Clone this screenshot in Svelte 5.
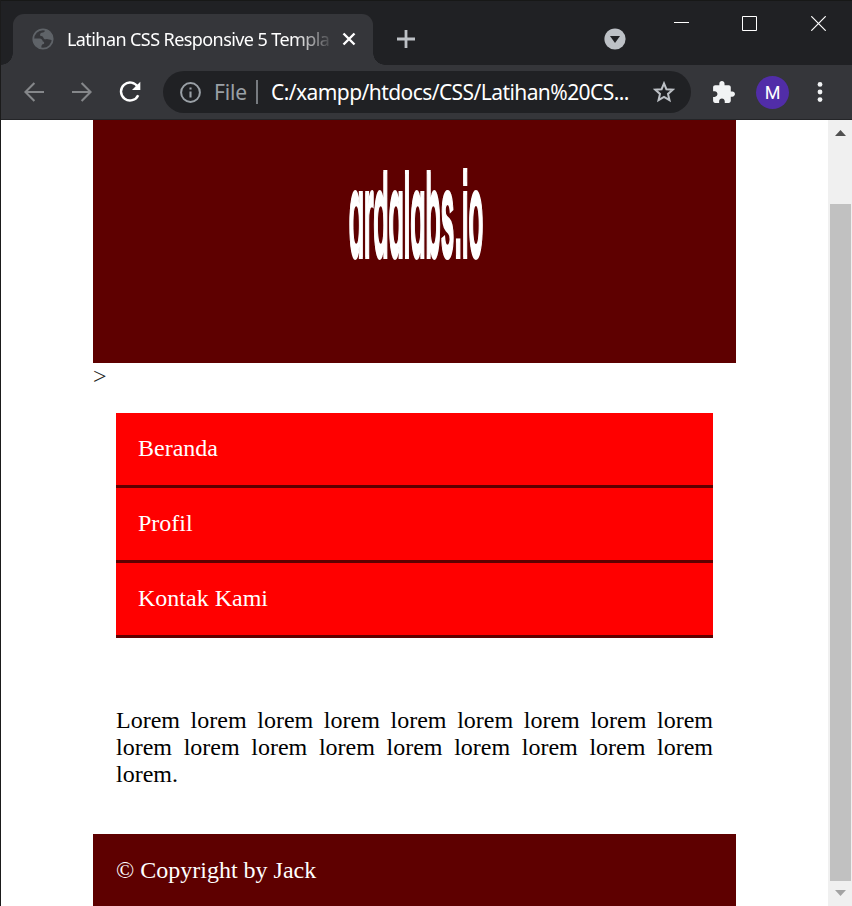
<script>
  const menu = ['Beranda', 'Profil', 'Kontak Kami'];
</script>

<div class="window">
  <div class="titlebar">
    <div class="tab">
      <svg class="globe" width="22" height="22" viewBox="0 0 22 22">
        <circle cx="11" cy="11" r="9.7" fill="none" stroke="#5f6368" stroke-width="1.8" />
        <path d="M13 1.5C13.2 4 11.8 4.6 9.6 4.8C8 5.3 8 6.6 8.2 7.8C9.6 8.2 11 8 11.3 9.6C11.7 11.3 12.8 11.6 14.2 11.2C16 10.8 17 12 20.5 12.2A10 10 0 0 0 13 1.5Z" fill="#5f6368" />
        <path d="M1.5 10.6H7.5C9.8 10.6 10.4 12 10.8 13.4C12.4 13.6 12.5 15 11.8 16C9.6 16.2 9.4 17.4 9.2 20.6A10 10 0 0 1 1.5 10.6Z" fill="#5f6368" />
      </svg>
      <span class="title">Latihan CSS Responsive 5 Templa</span>
      <svg class="close-tab" width="14" height="14" viewBox="0 0 14 14"><path d="M1.5 1.5 12.5 12.5M12.5 1.5 1.5 12.5" stroke="#fff" stroke-width="2.4" /></svg>
    </div>
    <svg class="plus" width="18" height="18" viewBox="0 0 18 18"><path d="M9 0V18M0 9H18" stroke="#bdc1c6" stroke-width="2.8" /></svg>
    <svg class="search" width="22" height="22" viewBox="0 0 22 22"><circle cx="11" cy="11" r="10.6" fill="#bdc1c6" /><path d="M6 8H16L11 15Z" fill="#202124" /></svg>
    <div class="controls">
      <svg width="15" height="15" viewBox="0 0 15 15"><path d="M0 6.5H15" stroke="#fff" /></svg>
      <svg width="15" height="15" viewBox="0 0 15 15"><path d="M.5 .5H14.5V14.5H.5Z" stroke="#fff" fill="none" /></svg>
      <svg width="15" height="15" viewBox="0 0 15 15"><path d="M.3 .3 14.7 14.7M14.7 .3 .3 14.7" stroke="#fff" stroke-width="1.2" /></svg>
    </div>
  </div>

  <div class="toolbar">
    <svg class="back" width="20" height="20" viewBox="0 0 20 20"><path d="M20 10H1.8M10.4 .9 1.4 10l9 9.1" fill="none" stroke="#85878a" stroke-width="2.1" /></svg>
    <svg class="forward" width="20" height="20" viewBox="0 0 20 20"><path d="M0 10H18.2M9.6 .9 18.6 10l-9 9.1" fill="none" stroke="#85878a" stroke-width="2.1" /></svg>
    <svg class="reload" width="22" height="22" viewBox="0 0 22 22"><path d="M18.8 6A9 9 0 1 0 19.2 14.2" fill="none" stroke="#fff" stroke-width="2.4" /><path d="M21.3 .8V9H13Z" fill="#fff" /></svg>
    <div class="address">
      <svg class="info" width="21" height="21" viewBox="0 0 21 21"><circle cx="10.5" cy="10.5" r="9.4" fill="none" stroke="#9aa0a6" stroke-width="2" /><path d="M10.5 9.4V15.4M10.5 5.4V7.6" stroke="#9aa0a6" stroke-width="2.1" /></svg>
      <span class="file">File</span>
      <span class="divider"></span>
      <span class="url">C:/xampp/htdocs/CSS/Latihan%20CS...</span>
      <svg class="star" width="22" height="22" viewBox="0 0 22 22"><path d="M11 2.4 13.4 8.2 19.8 8.7 15 12.9 16.5 19.2 11 15.9 5.5 19.2 7 12.9 2.2 8.7 8.6 8.2Z" fill="none" stroke="#bdc1c6" stroke-width="2" /></svg>
    </div>
    <svg class="puzzle" width="25" height="25" viewBox="0 0 24 24"><path fill="#f1f3f4" d="M20.5 11H19V7c0-1.1-.9-2-2-2h-4V3.5C13 2.12 11.88 1 10.5 1S8 2.12 8 3.5V5H4c-1.1 0-1.99.9-1.99 2v3.8H3.5c1.49 0 2.7 1.21 2.7 2.7s-1.21 2.7-2.7 2.7H2V20c0 1.1.9 2 2 2h3.8v-1.5c0-1.49 1.21-2.7 2.7-2.7 1.49 0 2.7 1.21 2.7 2.7V22H17c1.1 0 2-.9 2-2v-4h1.5c1.38 0 2.5-1.12 2.5-2.5S21.88 11 20.5 11z" /></svg>
    <div class="avatar">M</div>
    <svg class="dots" width="6" height="20" viewBox="0 0 6 20"><circle cx="3" cy="2.4" r="2.4" fill="#f1f3f4" /><circle cx="3" cy="10" r="2.4" fill="#f1f3f4" /><circle cx="3" cy="17.6" r="2.4" fill="#f1f3f4" /></svg>
  </div>

  <div class="viewport">
    <main>
      <header>
        <svg width="643" height="243" viewBox="0 0 643 243">
          <g transform="translate(255.7 136.5) scale(.2 1)">
            <text x="0" y="0" textLength="673" lengthAdjust="spacingAndGlyphs">ardalabs.io</text>
          </g>
        </svg>
      </header>
      <div class="stray">&gt;</div>
      <nav>
        {#each menu as item}
          <a href="#top">{item}</a>
        {/each}
      </nav>
      <p>Lorem lorem lorem lorem lorem lorem lorem lorem lorem lorem lorem lorem lorem lorem lorem lorem lorem lorem lorem.</p>
      <footer>© Copyright by Jack</footer>
    </main>
    <div class="scrollbar">
      <svg width="24" height="27" viewBox="0 0 24 27"><path d="M7 16H18L12.5 10Z" fill="#505050" /></svg>
      <div class="thumb"></div>
      <svg width="24" height="25" viewBox="0 0 24 25"><path d="M7 9H18L12.5 15Z" fill="#a3a3a3" /></svg>
    </div>
  </div>
</div>

<style>
  :global(body) { margin: 0; }
  .window {
    box-sizing: border-box;
    width: 852px;
    height: 906px;
    overflow: hidden;
    display: flex;
    flex-direction: column;
    background: #fff;
    border-left: 1px solid #1b1b1b;
  }
  svg { display: block; flex: none; }
  .titlebar {
    box-sizing: border-box;
    height: 65px;
    flex: none;
    display: flex;
    align-items: flex-start;
    background: #202124;
    border-top: 1px solid #171817;
    font-family: "Noto Sans", "Open Sans", sans-serif;
  }
  .tab {
    position: relative;
    box-sizing: border-box;
    width: 360px;
    height: 51px;
    margin: 13px 0 0 12px;
    padding: 0 0 2px 19px;
    display: flex;
    align-items: center;
    border-radius: 11px 11px 0 0;
    background: #35363a;
  }
  .tab::before, .tab::after {
    content: "";
    position: absolute;
    bottom: 0;
    width: 12px;
    height: 12px;
  }
  .tab::before { left: -12px; background: radial-gradient(circle at 0 0, transparent 11.5px, #35363a 12px); }
  .tab::after { right: -12px; background: radial-gradient(circle at 100% 0, transparent 11.5px, #35363a 12px); }
  .title {
    width: 263px;
    margin-left: 13px;
    white-space: nowrap;
    font-size: 18px;
    letter-spacing: -0.58px;
    line-height: 30px;
    color: #fff;
    -webkit-mask-image: linear-gradient(to right, #000 228px, transparent 267px);
    mask-image: linear-gradient(to right, #000 228px, transparent 267px);
  }
  .close-tab { margin-left: 12px; }
  .plus { margin: 29px 0 0 24px; }
  .search { margin: 27px 0 0 188.5px; }
  .controls { display: flex; gap: 53.5px; margin: 15px 0 0 48px; }
  .toolbar {
    box-sizing: border-box;
    height: 55px;
    flex: none;
    display: flex;
    align-items: center;
    background: #35363a;
    border-bottom: 1px solid #242528;
    font-family: "Noto Sans", "Open Sans", sans-serif;
  }
  .back { margin-left: 23px; }
  .forward { margin-left: 28px; }
  .reload { margin-left: 27px; }
  .address {
    box-sizing: border-box;
    width: 528px;
    height: 42px;
    margin-left: 22px;
    padding-left: 17px;
    display: flex;
    align-items: center;
    border-radius: 21px;
    background: #202124;
    font-size: 21px;
    white-space: nowrap;
  }
  .file { width: 31px; margin-left: 13px; color: #9aa0a6; letter-spacing: -0.2px; }
  .divider { width: 2px; height: 24px; margin-left: 11px; background: #777b80; }
  .url { width: 358px; margin-left: 13px; color: #fff; letter-spacing: -0.57px; }
  .star { margin-left: 24px; }
  .puzzle { margin-left: 20px; }
  .avatar {
    width: 33px;
    height: 33px;
    margin-left: 20px;
    border-radius: 50%;
    background: #512da8;
    color: #fff;
    font: 18px/33px Roboto, sans-serif;
    text-align: center;
  }
  .dots { margin-left: 28px; }
  .viewport { flex: 1; min-height: 0; display: flex; justify-content: space-between; font: 24px/27px "Liberation Serif", serif; }
  main { width: 643px; margin-left: 92px; color: #000; }
  header { height: 243px; background: #5e0000; }
  header text {
    font: 600 117px Inter, sans-serif;
    font-feature-settings: "cv11", "ss07";
    fill: #fff;
    stroke: #fff;
    stroke-width: 4px;
  }
  .stray { height: 27px; color: #222; }
  nav { margin: 23px 23px 0; display: flex; flex-direction: column; }
  nav a {
    box-sizing: border-box;
    height: 75px;
    padding: 22px 22px 23px;
    background: #f00;
    border-bottom: 3px solid #5e0000;
    color: #fff;
    text-decoration: none;
  }
  p { margin: 69px 23px 0; text-align: justify; }
  footer { box-sizing: border-box; height: 72px; margin-top: 46px; padding: 23px; background: #5e0000; color: #fff; }
  .scrollbar { width: 24px; display: flex; flex-direction: column; background: #f0f0f0; }
  .thumb { flex: 1; margin: 57px 1px 0 2px; background: #c1c1c1; }
</style>
